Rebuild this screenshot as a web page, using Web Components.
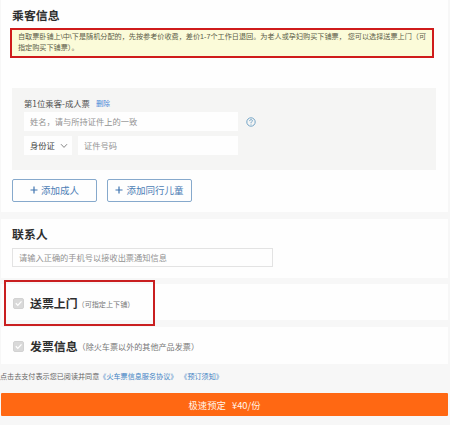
<!DOCTYPE html>
<html>
<head>
<meta charset="utf-8">
<title>乘客信息</title>
<style>
html,body{margin:0;height:425px;overflow:hidden;background:#f7f7f7}
body{font-family:"Liberation Sans","Noto Sans CJK SC",sans-serif;font-size:8.2px;color:#444}
</style>
</head>
<body>
<booking-page></booking-page>
<script>
const define = (name, html, setup) => customElements.define(name, class extends HTMLElement {
  constructor() {
    super();
    this.attachShadow({mode: 'open'}).innerHTML = html;
  }
  connectedCallback() { if (setup) setup(this, this.shadowRoot); }
});

define('form-panel', `<style>
:host{display:block;box-sizing:border-box;background:#fefefe;padding:0 14px 0 11px}
</style><slot></slot>`);

define('section-title', `<style>
:host{display:block;font:bold 11.9px/16px "Noto Sans CJK SC",sans-serif;color:#2e2e2e;white-space:nowrap}
</style><slot></slot>`);

define('notice-box', `<style>
:host{display:block;box-sizing:border-box;border:2px solid #cf1b1b;background:#fbfbd9;color:#5c5c48;
font:7.14px/11px "Liberation Sans","Noto Sans CJK SC",sans-serif;padding:2px 0 0 6px;white-space:nowrap}
</style><slot></slot>`);

define('text-field', `<style>
:host{display:flex;align-items:center;box-sizing:border-box;background:#fefefe;color:#929292;
font:8.25px/12px "Noto Sans CJK SC",sans-serif;white-space:nowrap;height:19px;padding:0 0 2px 6px}
:host([outlined]){border:1px solid #e3e3e3}
</style><slot></slot>`);

define('select-field', `<style>
:host{display:flex;align-items:center;justify-content:space-between;box-sizing:border-box;background:#fefefe;
color:#444;font:8.3px/12px "Noto Sans CJK SC",sans-serif;height:19px;width:48px;padding:0 4px 2px 6px}
svg{display:block;margin-top:2px}
</style><slot></slot><svg width="8" height="6" viewBox="0 0 8 6"><path d="M1 1.2 4 4.4 7 1.2" fill="none" stroke="#777" stroke-width=".9"/></svg>`);

define('help-icon', `<style>
:host{display:block;width:10px;height:10px}svg{display:block}
</style><svg width="10" height="10" viewBox="0 0 10 10" fill="none" stroke="#6da0c4" stroke-width=".95"><circle cx="5" cy="5" r="4.2"/><path d="M3.6 4.1C3.6 2.1 6.5 2.2 6.4 3.9 6.3 4.8 5 4.8 5 6M5 6.7v.9"/></svg>`);

define('add-button', `<style>
:host{display:flex;align-items:center;justify-content:center;gap:3px;box-sizing:border-box;width:85px;height:23px;
border:1px solid #86a9cc;border-radius:2px;background:#fefefe;color:#4c7db5;font:9.5px/14px "Noto Sans CJK SC",sans-serif;white-space:nowrap;padding-bottom:1px}
svg{display:block}
</style><svg width="8" height="8" viewBox="0 0 8 8"><path d="M4 .5v7M.5 4h7" stroke="#3f74b0" stroke-width="1.2"/></svg><slot></slot>`);

define('check-option', `<style>
:host{display:flex;align-items:center;height:18px;white-space:nowrap}
svg{display:block;margin:0 6px 0 1px}
.note{font:8.1px/14px "Noto Sans CJK SC",sans-serif;color:#777;padding-top:1px}
:host([small]) .note{font-size:7.1px}
</style><svg width="11" height="11" viewBox="0 0 11 11"><rect x=".5" y=".5" width="10" height="10" rx="1.5" fill="#d9d9d9" stroke="#d2d2d2"/><path d="M2.8 5.3 4.8 7.4 8.5 3.4" fill="none" stroke="#fff" stroke-width="1.3"/></svg>
<slot></slot><span class="note"><slot name="note"></slot></span>`);

define('text-link', `<style>
:host{display:inline-block;color:#4384c4}
</style><slot></slot>`);

define('submit-button', `<style>
:host{display:flex;align-items:center;justify-content:center;gap:6px;box-sizing:border-box;height:23px;
background:#ff6813;border-radius:1px;color:#fff4e8;font:9.4px/14px "Noto Sans CJK SC",sans-serif;white-space:nowrap}
</style><slot></slot>`);

define('booking-page', `<style>
:host{display:flex;flex-direction:column;box-sizing:border-box;width:450px;height:425px;padding:0 2px 0 1px}
.passenger{height:212px;padding-top:7px}
notice-box{width:424px;height:30px;margin:5px 0 0 -2px}
.card{box-sizing:border-box;width:424px;height:82px;background:#f5f5f4;margin-top:30px;padding:9px 12px}
.row{display:flex;align-items:center}
.head{height:12px;gap:6px;font:8.35px/12px "Noto Sans CJK SC",sans-serif;color:#4d4d4d;white-space:nowrap}
.head text-link{font-size:7.1px;color:#4a86d8}
.name{margin-top:3px;gap:8px}
.name text-field{width:214px}
.id{margin-top:5px;gap:6px}
.id text-field{width:160px}
.actions{display:flex;gap:10px;margin-top:9px}
.contact{height:59px;margin-top:7px;padding-top:7px}
.contact text-field{width:261px;margin-top:6px;font-size:8.22px}
.delivery{height:36px;margin-top:6px;padding-top:10px;position:relative}
.mark{position:absolute;left:3px;top:-4px;box-sizing:border-box;width:151px;height:46px;border:2px solid #c91f20;z-index:1}
.invoice{height:37px;margin-top:7px;padding-top:10px}
.terms{display:flex;height:12px;margin:6px 0 0 -1px;font:7.1px/12px "Noto Sans CJK SC",sans-serif;color:#666;white-space:nowrap}
.terms text-link+text-link{margin-left:3px}
submit-button{margin-top:11px}
</style>
<form-panel class="passenger">
<section-title>乘客信息</section-title>
<notice-box>自取票卧铺上\\中\\下是随机分配的，先按参考价收费，差价1-7个工作日退回。为老人或孕妇购买下铺票， 您可以选择送票上门（可<br>指定购买下铺票）。</notice-box>
<div class="card">
<div class="row head"><span>第1位乘客-成人票</span><text-link>删除</text-link></div>
<div class="row name"><text-field>姓名，请与所持证件上的一致</text-field><help-icon></help-icon></div>
<div class="row id"><select-field>身份证</select-field><text-field>证件号码</text-field></div>
</div>
<div class="actions"><add-button>添加成人</add-button><add-button>添加同行儿童</add-button></div>
</form-panel>
<form-panel class="contact">
<section-title>联系人</section-title>
<text-field outlined>请输入正确的手机号以接收出票通知信息</text-field>
</form-panel>
<form-panel class="delivery">
<div class="mark"></div>
<check-option small><section-title>送票上门</section-title><span slot="note">（可指定上下铺）</span></check-option>
</form-panel>
<form-panel class="invoice">
<check-option><section-title>发票信息</section-title><span slot="note">（除火车票以外的其他产品发票）</span></check-option>
</form-panel>
<div class="terms"><span>点击去支付表示您已阅读并同意</span><text-link>《火车票信息服务协议》</text-link><text-link>《预订须知》</text-link></div>
<submit-button><span>极速预定</span><span>¥40/份</span></submit-button>`);
</script>
</body>
</html>
